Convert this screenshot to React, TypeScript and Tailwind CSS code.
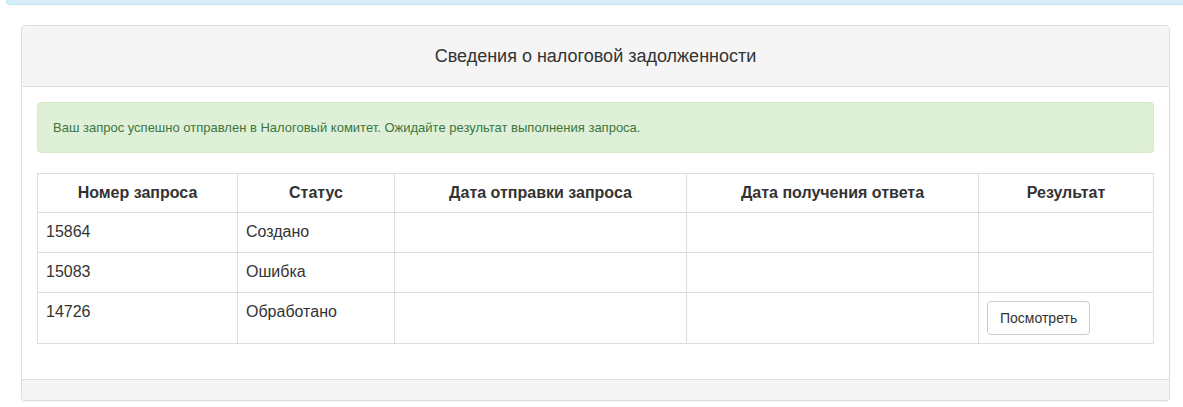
const rows = [
  { id: '15864', status: 'Создано', sent: '', received: '', result: false },
  { id: '15083', status: 'Ошибка', sent: '', received: '', result: false },
  { id: '14726', status: 'Обработано', sent: '', received: '', result: true },
];

export default function App() {
  return (
    <div className="min-h-[407px] bg-white text-[14px] text-[#333] font-['Liberation_Sans',Arial,sans-serif]">
      {/* bottom edge of the info alert scrolled above */}
      <div className="ml-[6px] h-[5px] rounded-bl-[4px] border-b border-l border-[#bce8f1] bg-[#d9edf7]" />

      <div className="ml-[21px] mt-[20px] w-[1149px] rounded-[4px] border border-[#ddd] bg-white shadow-[0_1px_1px_rgba(0,0,0,0.05)]">
        <div className="rounded-t-[3px] border-b border-[#ddd] bg-[#f5f5f5] px-[15px] py-[20px] text-center">
          <h3 className="text-[18px] leading-[20px] text-[#333]">
            Сведения о налоговой задолженности
          </h3>
        </div>

        <div className="p-[15px]">
          <div className="mb-[20px] rounded-[4px] border border-[#d6e9c6] bg-[#dff0d8] px-[15px] py-[15px] text-[13px] leading-[19px] text-[#3c763d]">
            Ваш запрос успешно отправлен в Налоговый комитет. Ожидайте результат выполнения запроса.
          </div>

          <table className="mb-[20px] w-full table-fixed border-collapse border border-[#ddd] text-[16px]">
            <colgroup>
              <col className="w-[200px]" />
              <col className="w-[157px]" />
              <col className="w-[292px]" />
              <col className="w-[292px]" />
              <col />
            </colgroup>
            <thead>
              <tr className="h-[39px]">
                {['Номер запроса', 'Статус', 'Дата отправки запроса', 'Дата получения ответа', 'Результат'].map(
                  (h) => (
                    <th
                      key={h}
                      className="border border-[#ddd] px-[8px] py-[8px] text-center align-middle font-bold leading-[20px] text-[#333]"
                    >
                      {h}
                    </th>
                  ),
                )}
              </tr>
            </thead>
            <tbody>
              {rows.map((r) => (
                <tr key={r.id} className={r.result ? 'h-[51px]' : 'h-[40px]'}>
                  <td className="border border-[#ddd] px-[8px] py-[8px] align-top leading-[22px]">{r.id}</td>
                  <td className="border border-[#ddd] px-[8px] py-[8px] align-top leading-[22px]">{r.status}</td>
                  <td className="border border-[#ddd] px-[8px] py-[8px] align-top leading-[22px]">{r.sent}</td>
                  <td className="border border-[#ddd] px-[8px] py-[8px] align-top leading-[22px]">{r.received}</td>
                  <td className="border border-[#ddd] px-[8px] py-[8px] align-top leading-[22px]">
                    {r.result && (
                      <button
                        type="button"
                        className="h-[34px] rounded-[4px] border border-[#ccc] bg-white px-[12px] text-[14px] leading-[20px] text-[#333]"
                      >
                        Посмотреть
                      </button>
                    )}
                  </td>
                </tr>
              ))}
            </tbody>
          </table>
        </div>

        <div className="h-[21px] rounded-b-[3px] border-t border-[#ddd] bg-[#f5f5f5]" />
      </div>
    </div>
  );
}
